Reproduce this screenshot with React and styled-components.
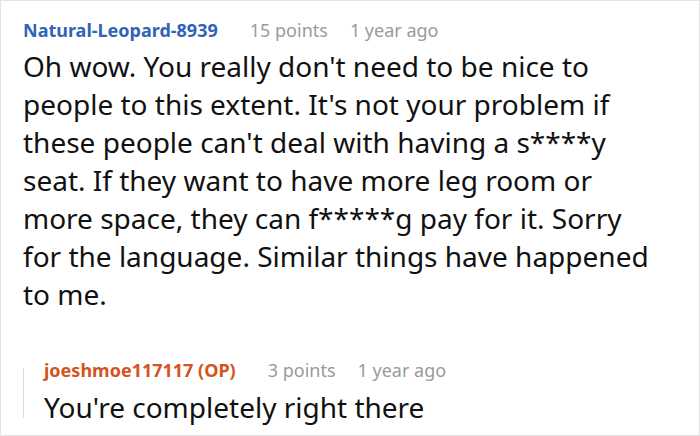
import React from 'react'
import styled, { createGlobalStyle } from 'styled-components';

const GlobalStyle = createGlobalStyle`
  html, body {
    margin: 0;
    padding: 0;
    background: #fff;
  }
  body {
    font-family: "Noto Sans", "Open Sans", sans-serif;
  }
`

const Comment = ({ author, op, points, time, children, reply }) => (
  <Thread $reply={reply}>
    <Meta>
      <Author $op={op}>{author}{op && ' (OP)'}</Author>
      <Points>{points} points</Points>
      <Muted>{time}</Muted>
    </Meta>
    <Body>{children}</Body>
  </Thread>
)

const App = () => {
  return (
    <>
      <GlobalStyle />
      <Card>
        <Comment author="Natural-Leopard-8939" points={15} time="1 year ago">
          Oh wow. You really don't need to be nice to<br />
          people to this extent. It's not your problem if<br />
          these people can't deal with having a s****y<br />
          seat. If they want to have more leg room or<br />
          more space, they can f*****g pay for it. Sorry<br />
          for the language. Similar things have happened<br />
          to me.
        </Comment>
        <Comment reply author="joeshmoe117117" op points={3} time="1 year ago">
          You're completely right there
        </Comment>
      </Card>
    </>
  )
}

const Card = styled.div`
  width: 700px;
  height: 436px;
  box-sizing: border-box;
  border: 1px solid #e2e2e2;
  padding: 14px 10px 0 22px;
  display: flex;
  flex-direction: column;
  gap: 42px;
  overflow: hidden;
`

const Thread = styled.div`
  position: relative;
  display: flex;
  flex-direction: column;
  gap: ${p => p.$reply ? '3px' : '2px'};
  ${p => p.$reply && `
    padding-left: 21px;
    &::before {
      content: '';
      position: absolute;
      left: 0;
      top: 13px;
      bottom: 8px;
      width: 1px;
      background: #dcdcdc;
    }
  `}
`

const Meta = styled.div`
  display: flex;
  align-items: baseline;
  font-size: 18px;
  line-height: 30px;
`

const Author = styled.span`
  font-weight: 700;
  color: ${p => p.$op ? '#d4541d' : '#3164b5'};
`

const Muted = styled.span`
  color: #9a9a9a;
`

const Points = styled(Muted)`
  margin: 0 22px 0 32px;
`

const Body = styled.p`
  margin: 0;
  font-size: 28px;
  line-height: 38px;
  color: #111;
  white-space: nowrap;
`

export default App;
